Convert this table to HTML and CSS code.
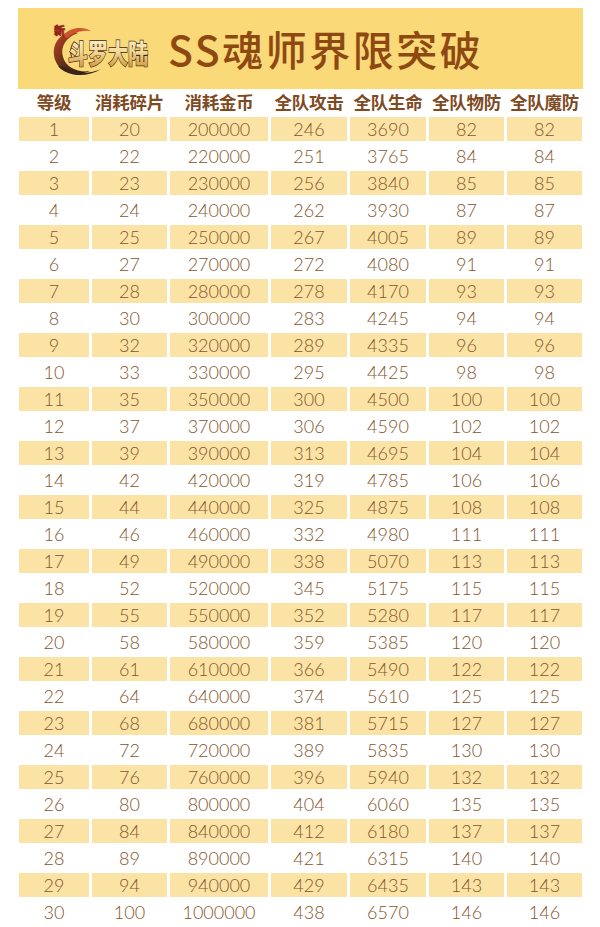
FILE: index.html
```html
<!DOCTYPE html>
<html lang="zh">
<head>
<meta charset="utf-8">
<title>SS魂师界限突破</title>
<link rel="stylesheet" href="styles.css">
</head>
<body>
<div class="page">
  <header class="banner">
    <svg class="logo" viewBox="0 0 110 60" width="110" height="60" aria-label="新斗罗大陆">
      <defs>
        <linearGradient id="gold" x1="0" y1="0" x2="0" y2="1">
          <stop offset="0" stop-color="#fff8e0"/>
          <stop offset="0.5" stop-color="#f4d894"/>
          <stop offset="1" stop-color="#c4852a"/>
        </linearGradient>
        <linearGradient id="swirl" x1="0" y1="0" x2="1" y2="1">
          <stop offset="0" stop-color="#c8402a"/>
          <stop offset="0.45" stop-color="#6a3418"/>
          <stop offset="1" stop-color="#1e1410"/>
        </linearGradient>
      </defs>
      <path d="M28 11 C12 14 5 28 11 42 C16 53 32 57 45 51 C34 53 21 48 18 37 C15 27 21 17 33 13 Z" fill="url(#swirl)"/>
      <path d="M13 46 C22 57 42 58 56 49 C46 54 30 55 20 47 Z" fill="#3a2418"/>
      <path d="M18 15 C26 7 38 6 46 11 C37 10 29 12 22 18 Z" fill="#d5522e"/>
      <path d="M30 20 C26 26 25 34 29 42 C24 36 23 27 30 20 Z" fill="#8a4a1c"/>
      <text x="9" y="15" class="logo-new">新</text>
      <text class="logo-name" transform="translate(23 44) scale(1 1.35)">斗罗大陆</text>
    </svg>
    <h1 class="title">SS魂师界限突破</h1>
  </header>

  <div class="table" id="table">
    <div class="hcell">等级</div>
    <div class="hcell">消耗碎片</div>
    <div class="hcell">消耗金币</div>
    <div class="hcell">全队攻击</div>
    <div class="hcell">全队生命</div>
    <div class="hcell">全队物防</div>
    <div class="hcell">全队魔防</div>

    <div class="cell y">1</div><div class="cell y">20</div><div class="cell y">200000</div><div class="cell y">246</div><div class="cell y">3690</div><div class="cell y">82</div><div class="cell y">82</div>
    <div class="cell">2</div><div class="cell">22</div><div class="cell">220000</div><div class="cell">251</div><div class="cell">3765</div><div class="cell">84</div><div class="cell">84</div>
    <div class="cell y">3</div><div class="cell y">23</div><div class="cell y">230000</div><div class="cell y">256</div><div class="cell y">3840</div><div class="cell y">85</div><div class="cell y">85</div>
    <div class="cell">4</div><div class="cell">24</div><div class="cell">240000</div><div class="cell">262</div><div class="cell">3930</div><div class="cell">87</div><div class="cell">87</div>
    <div class="cell y">5</div><div class="cell y">25</div><div class="cell y">250000</div><div class="cell y">267</div><div class="cell y">4005</div><div class="cell y">89</div><div class="cell y">89</div>
    <div class="cell">6</div><div class="cell">27</div><div class="cell">270000</div><div class="cell">272</div><div class="cell">4080</div><div class="cell">91</div><div class="cell">91</div>
    <div class="cell y">7</div><div class="cell y">28</div><div class="cell y">280000</div><div class="cell y">278</div><div class="cell y">4170</div><div class="cell y">93</div><div class="cell y">93</div>
    <div class="cell">8</div><div class="cell">30</div><div class="cell">300000</div><div class="cell">283</div><div class="cell">4245</div><div class="cell">94</div><div class="cell">94</div>
    <div class="cell y">9</div><div class="cell y">32</div><div class="cell y">320000</div><div class="cell y">289</div><div class="cell y">4335</div><div class="cell y">96</div><div class="cell y">96</div>
    <div class="cell">10</div><div class="cell">33</div><div class="cell">330000</div><div class="cell">295</div><div class="cell">4425</div><div class="cell">98</div><div class="cell">98</div>
    <div class="cell y">11</div><div class="cell y">35</div><div class="cell y">350000</div><div class="cell y">300</div><div class="cell y">4500</div><div class="cell y">100</div><div class="cell y">100</div>
    <div class="cell">12</div><div class="cell">37</div><div class="cell">370000</div><div class="cell">306</div><div class="cell">4590</div><div class="cell">102</div><div class="cell">102</div>
    <div class="cell y">13</div><div class="cell y">39</div><div class="cell y">390000</div><div class="cell y">313</div><div class="cell y">4695</div><div class="cell y">104</div><div class="cell y">104</div>
    <div class="cell">14</div><div class="cell">42</div><div class="cell">420000</div><div class="cell">319</div><div class="cell">4785</div><div class="cell">106</div><div class="cell">106</div>
    <div class="cell y">15</div><div class="cell y">44</div><div class="cell y">440000</div><div class="cell y">325</div><div class="cell y">4875</div><div class="cell y">108</div><div class="cell y">108</div>
    <div class="cell">16</div><div class="cell">46</div><div class="cell">460000</div><div class="cell">332</div><div class="cell">4980</div><div class="cell">111</div><div class="cell">111</div>
    <div class="cell y">17</div><div class="cell y">49</div><div class="cell y">490000</div><div class="cell y">338</div><div class="cell y">5070</div><div class="cell y">113</div><div class="cell y">113</div>
    <div class="cell">18</div><div class="cell">52</div><div class="cell">520000</div><div class="cell">345</div><div class="cell">5175</div><div class="cell">115</div><div class="cell">115</div>
    <div class="cell y">19</div><div class="cell y">55</div><div class="cell y">550000</div><div class="cell y">352</div><div class="cell y">5280</div><div class="cell y">117</div><div class="cell y">117</div>
    <div class="cell">20</div><div class="cell">58</div><div class="cell">580000</div><div class="cell">359</div><div class="cell">5385</div><div class="cell">120</div><div class="cell">120</div>
    <div class="cell y">21</div><div class="cell y">61</div><div class="cell y">610000</div><div class="cell y">366</div><div class="cell y">5490</div><div class="cell y">122</div><div class="cell y">122</div>
    <div class="cell">22</div><div class="cell">64</div><div class="cell">640000</div><div class="cell">374</div><div class="cell">5610</div><div class="cell">125</div><div class="cell">125</div>
    <div class="cell y">23</div><div class="cell y">68</div><div class="cell y">680000</div><div class="cell y">381</div><div class="cell y">5715</div><div class="cell y">127</div><div class="cell y">127</div>
    <div class="cell">24</div><div class="cell">72</div><div class="cell">720000</div><div class="cell">389</div><div class="cell">5835</div><div class="cell">130</div><div class="cell">130</div>
    <div class="cell y">25</div><div class="cell y">76</div><div class="cell y">760000</div><div class="cell y">396</div><div class="cell y">5940</div><div class="cell y">132</div><div class="cell y">132</div>
    <div class="cell">26</div><div class="cell">80</div><div class="cell">800000</div><div class="cell">404</div><div class="cell">6060</div><div class="cell">135</div><div class="cell">135</div>
    <div class="cell y">27</div><div class="cell y">84</div><div class="cell y">840000</div><div class="cell y">412</div><div class="cell y">6180</div><div class="cell y">137</div><div class="cell y">137</div>
    <div class="cell">28</div><div class="cell">89</div><div class="cell">890000</div><div class="cell">421</div><div class="cell">6315</div><div class="cell">140</div><div class="cell">140</div>
    <div class="cell y">29</div><div class="cell y">94</div><div class="cell y">940000</div><div class="cell y">429</div><div class="cell y">6435</div><div class="cell y">143</div><div class="cell y">143</div>
    <div class="cell">30</div><div class="cell">100</div><div class="cell">1000000</div><div class="cell">438</div><div class="cell">6570</div><div class="cell">146</div><div class="cell">146</div>
  </div>
</div>
</body>
</html>
```

FILE: styles.css
```css
html, body {
  margin: 0;
  padding: 0;
  background: #ffffff;
}

.page {
  width: 600px;
  padding: 8px 0 0 18px;
  box-sizing: border-box;
  font-family: "Noto Sans CJK SC", "Noto Sans", sans-serif;
}

.banner {
  width: 565px;
  height: 81px;
  background: #f9d978;
  display: flex;
  align-items: center;
  padding-left: 27px;
  box-sizing: border-box;
}

.logo {
  display: block;
  flex: none;
  margin-top: 2px;
}

.logo-new {
  font-family: "Noto Sans CJK SC", sans-serif;
  font-weight: 900;
  font-size: 11px;
  fill: #c0261c;
  stroke: #5a0f0a;
  stroke-width: 0.4px;
}

.logo-name {
  font-family: "Noto Sans CJK SC", sans-serif;
  font-weight: 900;
  font-size: 20px;
  fill: url(#gold);
  stroke: #3b2412;
  stroke-width: 1px;
  paint-order: stroke;
}

.title {
  margin: 0 0 0 13px;
  font-family: "Noto Sans CJK SC", "Noto Sans", sans-serif;
  font-weight: 500;
  font-size: 41px;
  line-height: 1;
  letter-spacing: 2.5px;
  color: #8e4812;
}

.table {
  margin-left: 1px;
  display: grid;
  grid-template-columns: 70px 75px 98px 76px 76px 75px 75px;
  grid-auto-rows: 24px;
  grid-template-rows: 25px;
  column-gap: 3px;
  row-gap: 3px;
}

.hcell {
  font-family: "Noto Sans CJK SC", sans-serif;
  font-weight: 700;
  font-size: 17.5px;
  line-height: 25px;
  color: #7e4a1f;
  text-align: center;
  white-space: nowrap;
  letter-spacing: -0.3px;
}

.cell {
  font-family: "Lato", "Noto Sans", sans-serif;
  font-weight: 300;
  font-size: 18px;
  line-height: 24px;
  color: #84552c;
  text-align: center;
  white-space: nowrap;
}

.cell.y {
  background: #fbe3a5;
}
```
